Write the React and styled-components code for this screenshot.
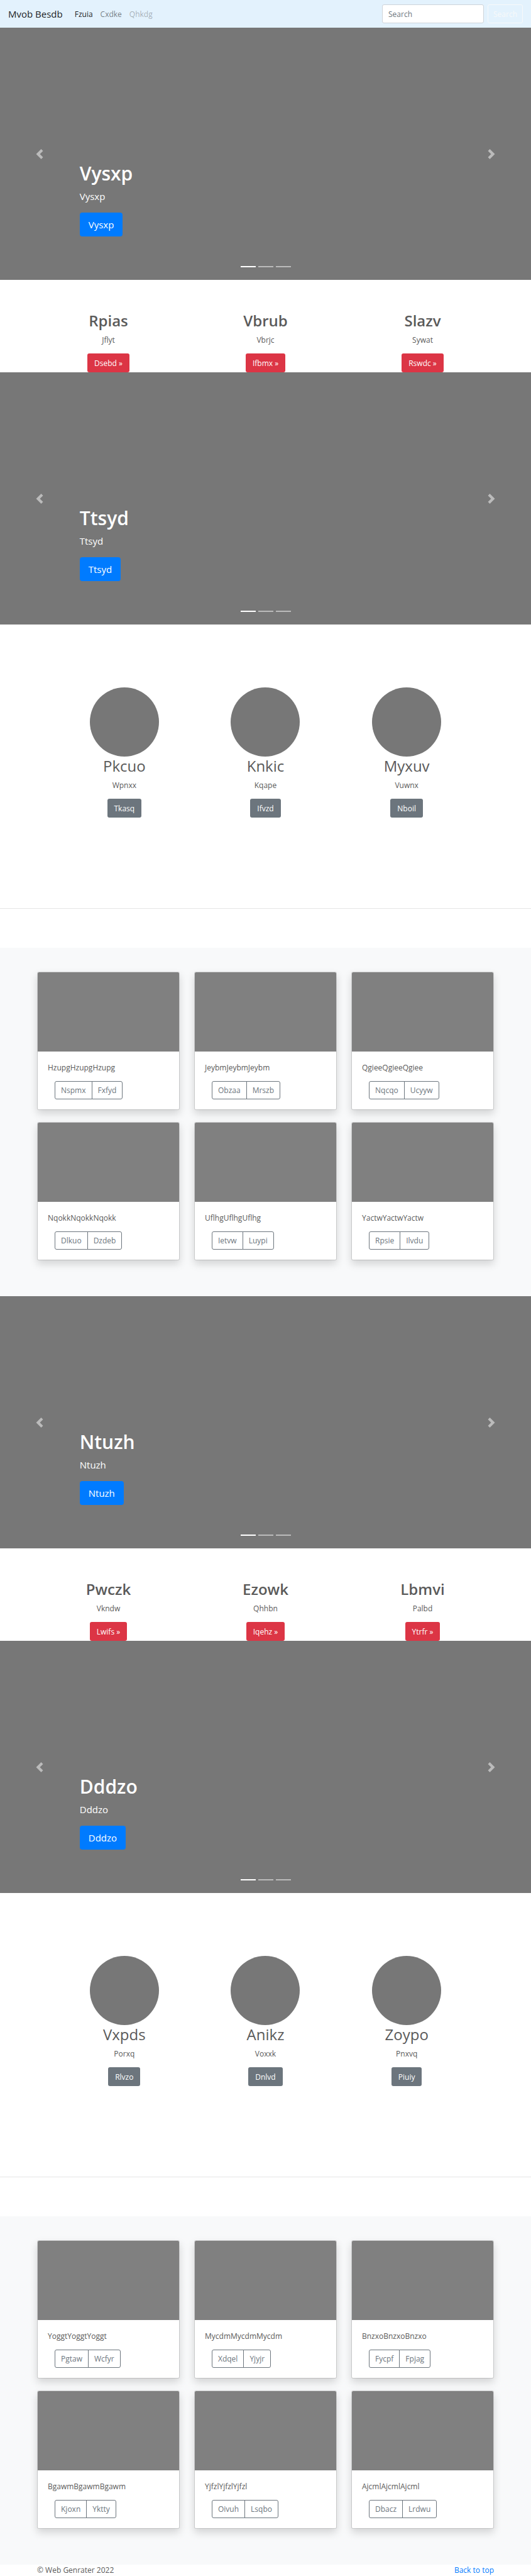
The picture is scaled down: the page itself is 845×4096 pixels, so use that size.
import React from "react";
import styled, { createGlobalStyle } from "styled-components";

const GlobalStyle = createGlobalStyle`
  *, *::before, *::after { box-sizing: border-box; }
  body {
    margin: 0;
    background: #fff;
    color: #5a5a5a;
    font: 400 12px/19px "Open Sans", "Noto Sans", sans-serif;
  }
  h1, h2, p { margin: 0; }
  a { color: #007bff; text-decoration: none; }
  button, input { font: inherit; margin: 0; cursor: pointer; }
`;

const Navbar = styled.nav`
  display: flex;
  align-items: center;
  height: 44px;
  padding: 0 13px;
  background: #e3f2fd;
`;

const Brand = styled.a`
  margin-right: 19px;
  font-size: 15px;
  line-height: 24px;
  color: rgba(0, 0, 0, 0.9);
`;

const NavList = styled.ul`
  display: flex;
  gap: 12px;
  margin: 0;
  padding: 0;
  list-style: none;
`;

const NavLink = styled.a`
  color: ${({ $tone }) =>
    ({ active: "rgba(0,0,0,0.9)", normal: "rgba(0,0,0,0.5)", disabled: "rgba(0,0,0,0.3)" })[$tone]};
`;

const SearchForm = styled.form`
  display: flex;
  gap: 6px;
  margin-left: auto;
`;

const SearchInput = styled.input`
  width: 162px;
  height: 30px;
  padding: 0 9px;
  border: 1px solid #ced4da;
  border-radius: 3px;
  background: #fff;
  cursor: text;
  &::placeholder { color: #6c757d; opacity: 1; }
`;

const SearchButton = styled.button`
  height: 30px;
  padding: 0 8px;
  border: 1px solid #f8f9fa;
  border-radius: 3px;
  background: transparent;
  color: #f8f9fa;
`;

const CarouselRoot = styled.section`
  position: relative;
  height: 401px;
  background: #777;
  color: #fff;
`;

const Caption = styled.div`
  position: absolute;
  left: 15%;
  right: 15%;
  bottom: 69px;
  display: flex;
  flex-direction: column;
  align-items: flex-start;
`;

const CaptionTitle = styled.h1`
  margin-bottom: 5px;
  font-size: 30px;
  font-weight: 600;
  line-height: 38px;
`;

const CaptionText = styled.p`
  margin-bottom: 14px;
  font-size: 15px;
  line-height: 24px;
`;

const PrimaryButton = styled.button`
  height: 38px;
  padding: 0 14px;
  border: 0;
  border-radius: 4px;
  background: #007bff;
  color: #fff;
  font-size: 15px;
`;

const Arrow = styled.button`
  position: absolute;
  top: 0;
  bottom: 0;
  ${({ $side }) => $side}: 0;
  display: flex;
  align-items: center;
  justify-content: center;
  width: 15%;
  padding: 0;
  border: 0;
  background: none;
  opacity: 0.5;
`;

const Indicators = styled.div`
  position: absolute;
  left: 0;
  right: 0;
  bottom: 20px;
  display: flex;
  justify-content: center;
  gap: 4px;
`;

const Indicator = styled.button`
  width: 24px;
  height: 2px;
  padding: 0;
  border: 0;
  background: #fff;
  opacity: ${({ $active }) => ($active ? 1 : 0.5)};
`;

const Features = styled.section`
  display: grid;
  grid-template-columns: repeat(3, 1fr);
  gap: 23px;
  max-width: 751px;
  margin: 0 auto;
  padding: 50px 12px 0;
`;

const Profiles = styled.section`
  display: grid;
  grid-template-columns: repeat(3, 1fr);
  max-width: 674px;
  margin: 0 auto;
  padding: 100px 0 144px;
`;

const Item = styled.article`
  display: flex;
  flex-direction: column;
  align-items: center;
`;

const Avatar = styled.div`
  width: 110px;
  height: 110px;
  border-radius: 50%;
  background: #777;
`;

const ItemTitle = styled.h2`
  margin-bottom: 6px;
  font-size: 24px;
  font-weight: ${({ $weight }) => $weight};
  line-height: 30px;
`;

const ItemText = styled.p`
  margin-bottom: 12px;
`;

const ItemButton = styled.button`
  height: 30px;
  padding: 0 11px;
  border: 0;
  border-radius: 3px;
  background: ${({ $color }) => $color};
  color: #fff;
`;

const Divider = styled.hr`
  height: 1px;
  margin: 0 0 62px;
  border: 0;
  background: rgba(0, 0, 0, 0.1);
`;

const Album = styled.section`
  padding: 38px 0 57px;
  background: #f8f9fa;
`;

const AlbumGrid = styled.div`
  display: grid;
  grid-template-columns: repeat(3, 1fr);
  gap: 19px 23px;
  max-width: 751px;
  margin: 0 auto;
  padding: 0 12px;
`;

const Card = styled.article`
  height: 220px;
  overflow: hidden;
  border: 1px solid rgba(0, 0, 0, 0.125);
  border-radius: 3px;
  background: #fff;
  background-clip: padding-box;
  box-shadow: 0 6px 13px rgba(0, 0, 0, 0.15);
`;

const Thumbnail = styled.div`
  height: 126px;
  background: #808080;
`;

const CardBody = styled.div`
  padding: 16px;
`;

const CardText = styled.p`
  margin-bottom: 12px;
`;

const ButtonGroup = styled.div`
  display: flex;
  margin-left: 11px;
`;

const GroupButton = styled.button`
  height: 29px;
  padding: 0 9px;
  border: 1px solid #6c757d;
  background: transparent;
  color: #6c757d;
  &:first-child { border-radius: 3px 0 0 3px; }
  &:last-child { margin-left: -1px; border-radius: 0 3px 3px 0; }
`;

const Footer = styled.footer`
  display: flex;
  justify-content: space-between;
  max-width: 751px;
  margin: 0 auto;
  padding: 0 12px;
  line-height: 18px;
`;

const chevrons = {
  left: "M5.25 0l-4 4 4 4 1.5-1.5L4.25 4l2.5-2.5L5.25 0z",
  right: "M2.75 0l-1.5 1.5L3.75 4l-2.5 2.5L2.75 8l4-4-4-4z",
};

function CarouselArrow({ side, label }) {
  return (
    <Arrow type="button" $side={side} aria-label={label}>
      <svg width="16" height="16" viewBox="0 0 8 8" fill="#fff" aria-hidden="true">
        <path d={chevrons[side]} />
      </svg>
    </Arrow>
  );
}

function Carousel({ title }) {
  return (
    <CarouselRoot>
      <Caption>
        <CaptionTitle>{title}</CaptionTitle>
        <CaptionText>{title}</CaptionText>
        <PrimaryButton type="button">{title}</PrimaryButton>
      </Caption>
      <CarouselArrow side="left" label="Previous" />
      <CarouselArrow side="right" label="Next" />
      <Indicators>
        {[1, 2, 3].map((n) => (
          <Indicator key={n} type="button" $active={n === 1} aria-label={`Slide ${n}`} />
        ))}
      </Indicators>
    </CarouselRoot>
  );
}

const blocks = [
  {
    hero: "Vysxp",
    features: [["Rpias", "Jflyt", "Dsebd"], ["Vbrub", "Vbrjc", "Ifbmx"], ["Slazv", "Sywat", "Rswdc"]],
    secondHero: "Ttsyd",
    profiles: [["Pkcuo", "Wpnxx", "Tkasq"], ["Knkic", "Kqape", "Ifvzd"], ["Myxuv", "Vuwnx", "Nboil"]],
    cards: [
      ["HzupgHzupgHzupg", "Nspmx", "Fxfyd"],
      ["JeybmJeybmJeybm", "Obzaa", "Mrszb"],
      ["QgieeQgieeQgiee", "Nqcqo", "Ucyyw"],
      ["NqokkNqokkNqokk", "Dlkuo", "Dzdeb"],
      ["UflhgUflhgUflhg", "Ietvw", "Luypi"],
      ["YactwYactwYactw", "Rpsie", "Ilvdu"],
    ],
  },
  {
    hero: "Ntuzh",
    features: [["Pwczk", "Vkndw", "Lwifs"], ["Ezowk", "Qhhbn", "Iqehz"], ["Lbmvi", "Palbd", "Ytrfr"]],
    secondHero: "Dddzo",
    profiles: [["Vxpds", "Porxq", "Rlvzo"], ["Anikz", "Voxxk", "Dnlvd"], ["Zoypo", "Pnxvq", "Piuiy"]],
    cards: [
      ["YoggtYoggtYoggt", "Pgtaw", "Wcfyr"],
      ["MycdmMycdmMycdm", "Xdqel", "Yjyjr"],
      ["BnzxoBnzxoBnzxo", "Fycpf", "Fpjag"],
      ["BgawmBgawmBgawm", "Kjoxn", "Yktty"],
      ["YjfzlYjfzlYjfzl", "Oivuh", "Lsqbo"],
      ["AjcmlAjcmlAjcml", "Dbacz", "Lrdwu"],
    ],
  },
];

function Block({ hero, features, secondHero, profiles, cards }) {
  return (
    <>
      <Carousel title={hero} />
      <Features>
        {features.map(([title, text, action]) => (
          <Item key={title}>
            <ItemTitle $weight={600}>{title}</ItemTitle>
            <ItemText>{text}</ItemText>
            <ItemButton type="button" $color="#dc3545">{`${action} »`}</ItemButton>
          </Item>
        ))}
      </Features>
      <Carousel title={secondHero} />
      <Profiles>
        {profiles.map(([title, text, action]) => (
          <Item key={title}>
            <Avatar />
            <ItemTitle $weight={400}>{title}</ItemTitle>
            <ItemText>{text}</ItemText>
            <ItemButton type="button" $color="#6c757d">{action}</ItemButton>
          </Item>
        ))}
      </Profiles>
      <Divider />
      <Album>
        <AlbumGrid>
          {cards.map(([text, first, second]) => (
            <Card key={text}>
              <Thumbnail />
              <CardBody>
                <CardText>{text}</CardText>
                <ButtonGroup>
                  <GroupButton type="button">{first}</GroupButton>
                  <GroupButton type="button">{second}</GroupButton>
                </ButtonGroup>
              </CardBody>
            </Card>
          ))}
        </AlbumGrid>
      </Album>
    </>
  );
}

export default function App() {
  return (
    <>
      <GlobalStyle />
      <Navbar id="top">
        <Brand href="#top">Mvob Besdb</Brand>
        <NavList>
          <li><NavLink href="#top" $tone="active">Fzuia</NavLink></li>
          <li><NavLink href="#top" $tone="normal">Cxdke</NavLink></li>
          <li><NavLink href="#top" $tone="disabled" aria-disabled="true">Qhkdg</NavLink></li>
        </NavList>
        <SearchForm>
          <SearchInput type="search" placeholder="Search" aria-label="Search" />
          <SearchButton type="button">Search</SearchButton>
        </SearchForm>
      </Navbar>
      <main>
        {blocks.map((block) => (
          <Block key={block.hero} {...block} />
        ))}
      </main>
      <Footer>
        <span>© Web Genrater 2022</span>
        <a href="#top">Back to top</a>
      </Footer>
    </>
  );
}
